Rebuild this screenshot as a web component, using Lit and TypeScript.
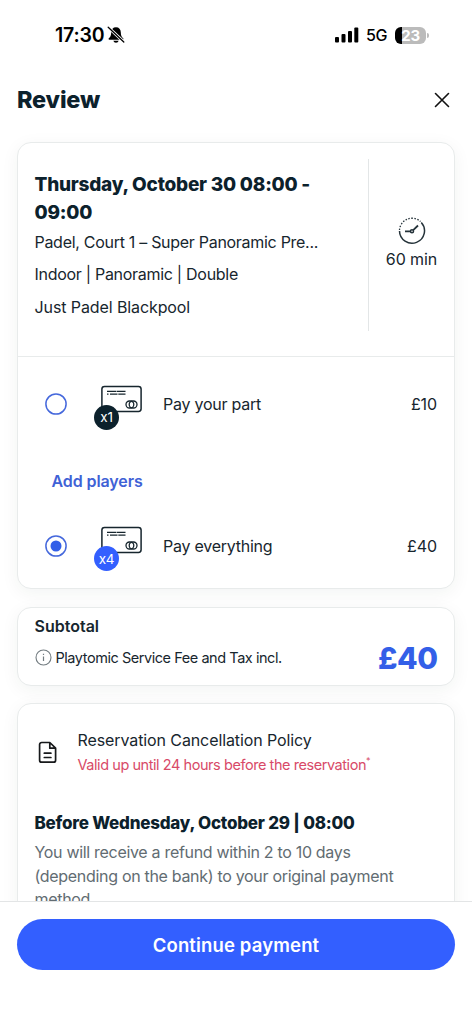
import { LitElement, html, css, svg } from "lit";
import { customElement, property } from "lit/decorators.js";

@customElement("pay-option")
class PayOption extends LitElement {
  @property() label = "";
  @property() price = "";
  @property() count = "";
  @property({ type: Boolean }) selected = false;

  static styles = css`
    :host {
      display: grid; grid-template-columns: 21px 28px 48px 21px 1fr auto; grid-template-rows: 48px;
      align-items: center; height: 48px;
    }
    .radio { display: block; }
    .pic { grid-column: 3; position: relative; height: 46px; margin-top: 7px; }
    .pic svg { display: block; margin-left: 6.5px; }
    .badge {
      position: absolute; left: 0; bottom: 1px; width: 25px; height: 25px; border-radius: 50%;
      display: flex; align-items: center; justify-content: center;
      background: #0c212c; color: #fff; font-size: 13.5px; letter-spacing: -0.3px;
    }
    .badge.on { background: #335fff; }
    .label { grid-column: 5; font-size: 16px; letter-spacing: -0.25px; }
    .price { font-size: 16px; letter-spacing: -0.1px; }
  `;

  render() {
    return html`
      <svg class="radio" width="22" height="22" viewBox="0 0 22 22" fill="none">
        <circle cx="11" cy="11" r="10.1" stroke="#4568dc" stroke-width="1.5" />
        ${this.selected ? svg`<circle cx="11" cy="11" r="5.5" fill="#335fe8" />` : ""}
      </svg>
      <div class="pic">
        <svg width="41" height="28" viewBox="0 0 41 28" fill="none" stroke="#17262e">
          <rect x="0.9" y="1.4" width="39.2" height="25" rx="2.6" stroke-width="1.5" />
          <path d="M6 6.4h9.500M16 6.400h8.500M6 9.200h1.500M9 9.200h7.500M17.300 9.200h7.200" stroke-width="1.2" />
          <rect x="25" y="16" width="7.800" height="7" rx="3.500" stroke-width="1.300" />
          <rect x="28.200" y="16" width="7.800" height="7" rx="3.500" stroke-width="1.300" />
        </svg>
        <span class="badge ${this.selected ? "on" : ""}">${this.count}</span>
      </div>
      <span class="label">${this.label}</span>
      <span class="price">${this.price}</span>
    `;
  }
}

@customElement("app-root")
class AppRoot extends LitElement {
  static styles = css`
    :host {
      display: flex; flex-direction: column; height: 1024px; overflow: hidden; background: #fff;
      font-family: Inter, "Liberation Sans", sans-serif; color: #17262e; box-sizing: border-box;
    }
    * { box-sizing: border-box; }
    svg { display: block; flex: none; }
    .status { flex: none; display: flex; align-items: center; height: 70px; padding: 0 46px 0 55px; color: #000; }
    .time { font-size: 19.5px; font-weight: 600; letter-spacing: -0.2px; margin-right: 3px; }
    .signal { margin-left: auto; margin-right: 7px; }
    .net { font-size: 16px; font-weight: 500; letter-spacing: -0.4px; margin-right: 8px; }
    .battery {
      position: relative; width: 31px; height: 17px; border-radius: 6px; color: #fff;
      background: linear-gradient(90deg, #000 24%, #bbb 24%);
      font-size: 15px; line-height: 17px; font-weight: 700; text-align: center; letter-spacing: -0.3px;
    }
    .battery::after {
      content: ""; position: absolute; right: -3px; top: 6px; width: 2px; height: 5px;
      border-radius: 0 2px 2px 0; background: #bbb;
    }
    header { flex: none; display: flex; align-items: center; justify-content: space-between; height: 59px; padding: 0 22px 0 17px; }
    h1 { margin: 1px 0 0; font-size: 23.5px; line-height: 30px; font-weight: 800; letter-spacing: -0.2px; color: #0c212c; }
    main { flex: 1; min-height: 0; overflow: hidden; display: flex; flex-direction: column; gap: 17.5px; padding: 12.5px 17px 0; }
    .card { flex: none; border: 1px solid #e8ebeb; border-radius: 14px; background: #fff; box-shadow: 0 4px 18px rgba(20, 50, 45, 0.055); }
    .booking { display: flex; height: 214.5px; border-bottom: 1px solid #e8ebeb; padding: 16px 0 25px 16.5px; }
    .info { flex: 1; padding-top: 12px; }
    h2 { margin: 0 0 -1px; font-size: 19px; line-height: 28px; font-weight: 800; letter-spacing: -0.23px; color: #0c212c; white-space: nowrap; }
    .line { font-size: 16px; line-height: 32.5px; letter-spacing: -0.29px; white-space: nowrap; }
    .l3 { letter-spacing: -0.1px; }
    .duration {
      width: 86px; border-left: 1px solid #e3e6e7; display: flex; flex-direction: column;
      align-items: center; padding-top: 58px; font-size: 16px; line-height: 20px; gap: 4px;
    }
    .duration span { letter-spacing: -0.1px; }
    .options { height: 231px; padding: 23px 17px 0 27px; }
    .add { margin: 41.5px 0 30px 6.5px; font-size: 16px; line-height: 22px; font-weight: 600; letter-spacing: -0.1px; color: #3f62d6; }
    .subtotal { height: 79px; padding: 0 16.5px; display: flex; align-items: flex-start; justify-content: space-between; }
    .sub { font-size: 16px; line-height: 22px; font-weight: 600; margin-top: 7.5px; }
    .fee { display: flex; align-items: center; gap: 4px; margin-top: 10.5px; font-size: 14.5px; line-height: 20px; letter-spacing: -0.45px; }
    .total { font-size: 30px; line-height: 34px; font-weight: 800; letter-spacing: -0.5px; color: #335fe8; margin-top: 33px; }
    .policy { height: 240px; padding: 24px 16.5px 0; }
    .head { display: flex; align-items: center; gap: 18px; height: 49px; }
    .name { font-size: 16px; line-height: 24px; letter-spacing: -0.1px; }
    .valid { font-size: 14.5px; line-height: 25px; color: #d84a68; letter-spacing: -0.44px; white-space: nowrap; }
    .valid sup { font-size: 9px; line-height: 0; }
    h3 { margin: 34px 0 0; font-size: 17px; line-height: 24px; font-weight: 800; letter-spacing: -0.23px; color: #0c212c; white-space: nowrap; }
    .text { margin: 6px 0 0; font-size: 16px; line-height: 23.5px; letter-spacing: -0.31px; color: #626c72; white-space: nowrap; }
    footer { flex: none; position: relative; height: 123px; border-top: 1px solid #e3e5e6; background: #fff; padding: 17px 17px 0; }
    button {
      display: block; width: 100%; height: 51px; border: 0; border-radius: 26px; background: #335fff; color: #fff;
      font: 600 18.5px/52px Inter, "Liberation Sans", sans-serif; letter-spacing: 0.15px; padding: 0;
    }
  `;

  render() {
    return html`
      <div class="status">
        <span class="time">17:30</span>
        <svg width="18" height="18" viewBox="0 0 18 18">
          <path d="M9 1.2c-3 0-4.7 2-4.8 5C4.1 9.700 3.500 10.700 1.800 12.200c-.5.6-.2 1.500.6 1.500h13.200c.8 0 1.100-.9.600-1.500C14.500 10.700 13.900 9.700 13.800 6.200 13.700 3.200 12 1.200 9 1.200zM6.300 14.800a2.800 2.800 0 0 0 5.400 0z" />
          <path d="M1.500 1.500 16.800 15.800" stroke="#fff" stroke-width="3" />
          <path d="M1.200 1.200 16.800 16" stroke="#000" stroke-width="1.300" stroke-linecap="round" />
        </svg>
        <svg class="signal" width="25" height="16" viewBox="0 0 25 16">
          <rect x="1" y="10" width="4" height="5.500" rx="1" />
          <rect x="7.500" y="7" width="4" height="8.500" rx="1" />
          <rect x="14" y="4" width="4" height="11.500" rx="1" />
          <rect x="20.300" y="0.500" width="4" height="15" rx="1" />
        </svg>
        <span class="net">5G</span>
        <span class="battery">23</span>
      </div>
      <header>
        <h1>Review</h1>
        <svg width="16" height="16" viewBox="0 0 16 16" fill="none" stroke="#111" stroke-width="1.600" stroke-linecap="round">
          <path d="M1.500 1.500 14.500 14.500M14.500 1.500 1.500 14.500" />
        </svg>
      </header>
      <main>
        <section class="card">
          <div class="booking">
            <div class="info">
              <h2>Thursday, October 30 08:00 -<br />09:00</h2>
              <div class="line l1">Padel, Court 1 – Super Panoramic Pre...</div>
              <div class="line l2">Indoor | Panoramic | Double</div>
              <div class="line l3">Just Padel Blackpool</div>
            </div>
            <div class="duration">
              <svg width="28" height="28" viewBox="0 0 28 28" fill="none" stroke="#25333a" stroke-width="1.500">
                <path d="M23.300 5.400A12.500 12.500 0 1 1 1.500 14" />
                <path d="M1.500 13A12.500 12.500 0 0 1 22.500 4.600" stroke-dasharray="1.500 1.500" stroke-width="1.300" />
                <circle cx="14" cy="14.300" r="1.500" />
                <path d="M7 14.300h5.500M15.200 13.200 20 8.500" stroke-width="1.800" />
              </svg>
              <span>60 min</span>
            </div>
          </div>
          <div class="options">
            <pay-option label="Pay your part" price="£10" count="x1"></pay-option>
            <div class="add"><span>Add players</span></div>
            <pay-option label="Pay everything" price="£40" count="x4" selected></pay-option>
          </div>
        </section>
        <section class="card subtotal">
          <div>
            <div class="sub">Subtotal</div>
            <div class="fee">
              <svg width="17" height="17" viewBox="0 0 17 17" fill="none" stroke="#737c81">
                <circle cx="8.500" cy="8.500" r="7.500" stroke-width="1.100" />
                <path d="M8.500 7.500v4.500M8.500 4.700v1.300" stroke-width="1.200" />
              </svg>
              <span>Playtomic Service Fee and Tax incl.</span>
            </div>
          </div>
          <div class="total">£40</div>
        </section>
        <section class="card policy">
          <div class="head">
            <svg width="25" height="24" viewBox="0 0 25 24" fill="none" stroke="#17191b" stroke-width="1.700" stroke-linejoin="round" stroke-linecap="round">
              <path d="M14.800 1.500H6.600a2 2 0 0 0-2 2v15.700a2 2 0 0 0 2 2h12a2 2 0 0 0 2-2V7.200zM14.800 1.500v5.700h5.800M9.300 12.200h6.600M9.300 16.500h6.600" />
            </svg>
            <div>
              <div class="name">Reservation Cancellation Policy</div>
              <div class="valid">Valid up until 24 hours before the reservation<sup>*</sup></div>
            </div>
          </div>
          <h3>Before Wednesday, October 29 | 08:00</h3>
          <p class="text">You will receive a refund within 2 to 10 days<br />(depending on the bank) to your original payment<br />method.</p>
        </section>
      </main>
      <footer><button>Continue payment</button></footer>
    `;
  }
}
